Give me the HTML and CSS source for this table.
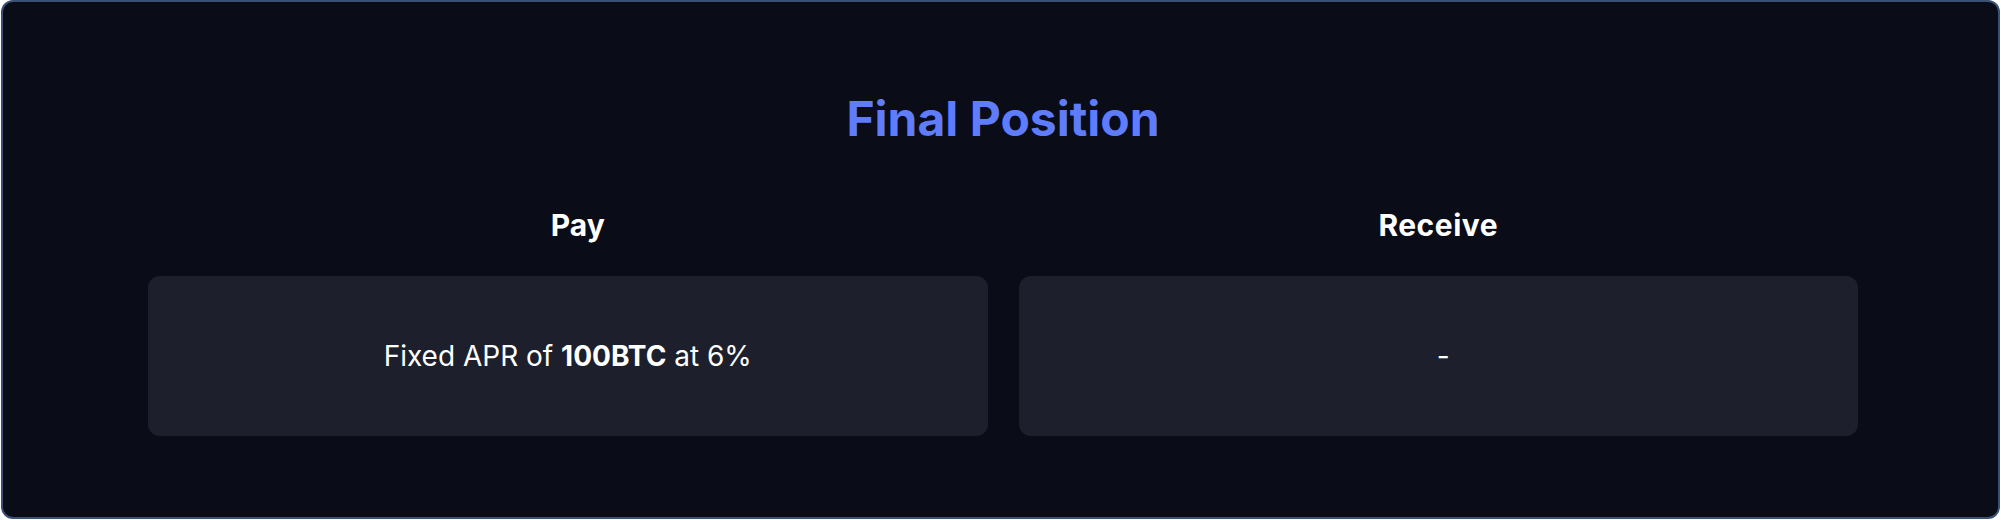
FILE: index.html
```html
<!DOCTYPE html>
<html>
<head>
<meta charset="utf-8">
<link rel="stylesheet" href="styles.css">
</head>
<body>
<section class="panel">
  <h1 class="title">Final Position</h1>
  <div class="grid">
    <h2 class="label label-pay">Pay</h2>
    <h2 class="label label-receive">Receive</h2>
    <div class="card">
      <p class="card-text">Fixed APR of <strong>100BTC</strong> at 6%</p>
    </div>
    <div class="card">
      <p class="card-text card-dash">-</p>
    </div>
  </div>
</section>
</body>
</html>
```
FILE: styles.css
```css
* { box-sizing: border-box; }
html, body {
  margin: 0;
  padding: 0;
  background: #ffffff;
}
body {
  font-family: Inter, "Noto Sans", sans-serif;
  width: 2001px;
  height: 520px;
}
.panel {
  width: 1999px;
  height: 519px;
  margin-left: 1px;
  background: #0a0d17;
  border: 2px solid #3b5174;
  border-radius: 12px;
  padding: 88px 140px 0 145px;
}
.title {
  margin: 0 0 59px;
  text-align: center;
  font-size: 48px;
  line-height: 58px;
  font-weight: 700;
  color: #5f7cfd;
}
.grid {
  display: grid;
  grid-template-columns: 1fr 1fr;
  column-gap: 31px;
  row-gap: 33px;
}
.label {
  margin: 0;
  text-align: center;
  font-size: 30px;
  line-height: 36px;
  font-weight: 700;
  color: #ffffff;
}
.label-pay { padding-left: 20px; }
.label-receive { letter-spacing: 0.5px; }
.card {
  height: 160px;
  background: #1d202c;
  border-radius: 12px;
  display: flex;
  align-items: center;
  justify-content: center;
}
.card-text {
  margin: 0;
  font-size: 28px;
  line-height: 34px;
  font-weight: 400;
  color: #ffffff;
}
.card-text strong { font-weight: 700; }
.card-dash { padding-left: 10px; }
```
